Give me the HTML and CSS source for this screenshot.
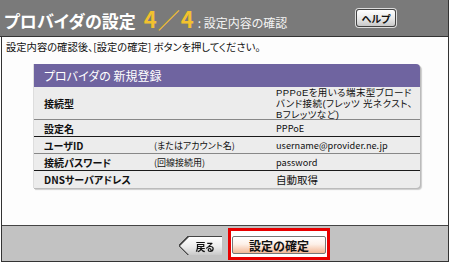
FILE: index.html
```html
<!DOCTYPE html>
<html lang="ja">
<head>
<meta charset="utf-8">
<link rel="stylesheet" href="styles.css">
</head>
<body>
<div class="frame">
  <header class="head">
    <h1 class="title">プロバイダの設定<span class="step">4／4</span><span class="sub">: 設定内容の確認</span></h1>
    <button class="help">ヘルプ</button>
  </header>
  <main class="content">
    <p class="lead">設定内容の確認後、[設定の確定] ボタンを押してください。</p>
    <section class="panel">
      <div class="panel-head">プロバイダの 新規登録</div>
      <div class="row tall line-light">
        <div class="lab">接続型</div>
        <div class="mid"></div>
        <div class="val multi">PPPoEを用いる端末型ブロード<br>バンド接続(フレッツ 光ネクスト、<br>Bフレッツなど)</div>
      </div>
      <div class="row line-dark">
        <div class="lab">設定名</div>
        <div class="mid"></div>
        <div class="val">PPPoE</div>
      </div>
      <div class="row line-light">
        <div class="lab">ユーザID</div>
        <div class="mid">(またはアカウント名)</div>
        <div class="val">username@provider.ne.jp</div>
      </div>
      <div class="row line-dark">
        <div class="lab">接続パスワード</div>
        <div class="mid">(回線接続用)</div>
        <div class="val">password</div>
      </div>
      <div class="row">
        <div class="lab">DNSサーバアドレス</div>
        <div class="mid"></div>
        <div class="val big">自動取得</div>
      </div>
    </section>
  </main>
  <footer class="foot">
    <div class="back-wrap"><button class="back">戻る</button></div>
    <div class="confirm-box"><button class="confirm">設定の確定</button></div>
  </footer>
</div>
</body>
</html>
```

FILE: styles.css
```css
* { box-sizing: border-box; }
html, body { margin: 0; padding: 0; background: #ffffff; }
body {
  font-family: "Noto Sans CJK JP", "Noto Sans", sans-serif;
  font-feature-settings: "palt";
  color: #111;
}
.frame {
  width: 448px;
  height: 262px;
  margin-left: 1px;
  border-left: 1px solid #333;
  border-right: 1px solid #333;
  display: flex;
  flex-direction: column;
}
.head {
  height: 37px;
  background: #7a7a7a;
  border-bottom: 1px solid #333;
  display: flex;
  align-items: center;
  justify-content: space-between;
  padding: 0 52px 0 4px;
  margin-left: -2px;
}
.title {
  margin: 0;
  color: #fff;
  font-size: 17px;
  font-weight: bold;
  display: flex;
  align-items: baseline;
  white-space: nowrap;
  line-height: 1;
}
.step {
  color: #f2c12e;
  font-size: 22px;
  margin-left: 8px;
  letter-spacing: 1px;
}
.sub {
  font-size: 12px;
  font-weight: normal;
  margin-left: 3px;
  color: #f4f4f4;
}
.help {
  width: 40px;
  height: 18px;
  padding: 0;
  border: 1px solid #444;
  border-radius: 3px;
  background: linear-gradient(#ffffff, #e8e8e8 55%, #c8c8c8);
  font-family: inherit;
  font-feature-settings: "palt";
  font-size: 10px;
  font-weight: bold;
  color: #111;
  box-shadow: 0 0 0 1px #ddd;
}
.content {
  flex: 1;
  background: #fdfdfd;
  padding: 3px 0 0 0;
}
.lead {
  margin: 0 0 0 4px;
  font-size: 10.3px;
  line-height: 14px;
}
.panel {
  margin: 10px 0 0 31px;
  width: 387px;
  background: #ececec;
  border-radius: 0 4px 4px 0;
  box-shadow: 1px 1px 0 #bbb, 2px 2px 1px #ccc;
  border-left: 1px solid #ddd;
}
.panel-head {
  height: 23px;
  background: #6f64a0;
  color: #fff;
  font-size: 12px;
  line-height: 23px;
  padding-left: 10px;
  border-radius: 0 4px 0 0;
}
.row {
  display: grid;
  grid-template-columns: 110px 122px 1fr;
  align-items: center;
  height: 17px;
  padding-left: 10px;
  font-size: 10px;
}
.row.tall { height: 33px; }
.line-light { border-bottom: 1px solid #888; }
.line-dark { border-bottom: 1px solid #1a1a1a; }
.lab { font-size: 10px; font-weight: bold; white-space: nowrap; }
.mid { font-size: 9px; white-space: nowrap; }
.val { font-size: 9.2px; line-height: 12px; white-space: nowrap; }
.val.multi {
  font-family: "Liberation Sans", "Noto Sans CJK JP", sans-serif;
  font-size: 9.5px;
  line-height: 11px;
  letter-spacing: 0.4px;
}
.val.big { font-size: 10.5px; line-height: 13px; }
.foot {
  height: 37px;
  background: #c2c2c2;
  border-top: 1px solid #444;
  border-bottom: 1px solid #333;
  display: flex;
  align-items: center;
  padding-left: 178px;
  gap: 6px;
}
.back-wrap {
  filter: drop-shadow(0.6px 0 0 #444) drop-shadow(-0.6px 0 0 #444) drop-shadow(0 0.6px 0 #444) drop-shadow(0 -0.6px 0 #444);
}
.back {
  width: 42px;
  height: 18px;
  border: 0;
  padding: 0 0 0 8px;
  clip-path: polygon(0 50%, 9px 0, 100% 0, 100% 100%, 9px 100%);
  background: linear-gradient(#ffffff, #ececec 55%, #c9c9c9);
  font-family: inherit;
  font-feature-settings: "palt";
  font-size: 10px;
  font-weight: bold;
  color: #111;
}
.confirm-box {
  border: 3px solid #e80000;
  padding: 1px;
  background: #fff;
}
.confirm {
  width: 94px;
  height: 18px;
  border: 1px solid #777;
  border-radius: 2px;
  background: linear-gradient(#ffffff, #fdf0e8 45%, #f2b896);
  font-family: inherit;
  font-feature-settings: "palt";
  font-size: 12px;
  font-weight: bold;
  color: #111;
  padding: 0;
}
```
